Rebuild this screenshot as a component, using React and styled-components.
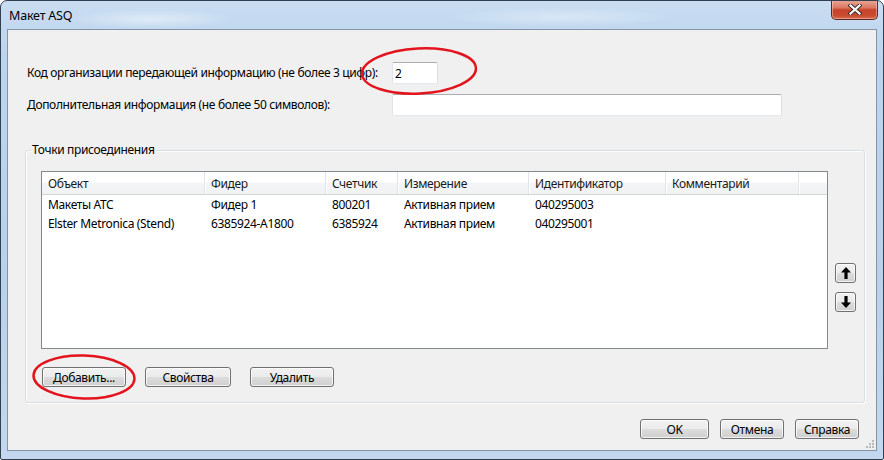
import React from "react";
import styled, { createGlobalStyle } from "styled-components";

const Global = createGlobalStyle`
  html, body { margin: 0; padding: 0; background: #ffffff; }
  body { font-family: "Noto Sans", "Open Sans", sans-serif; font-size: 12px; color: #000; letter-spacing: -0.35px; }
  * { box-sizing: border-box; }
`;

const Window = styled.div`
  position: relative;
  width: 884px;
  height: 460px;
  border: 1px solid #33404f;
  border-radius: 7px 7px 2px 2px;
  background:
    radial-gradient(ellipse 120px 14px at 150px 18px, rgba(255,255,255,0.45), rgba(255,255,255,0) 70%),
    radial-gradient(ellipse 160px 14px at 560px 16px, rgba(255,255,255,0.35), rgba(255,255,255,0) 70%),
    linear-gradient(to bottom, #c9ddf2 0%, #bcd4ed 12%, #b9d1ea 60%, #c3d8ee 100%);
  padding: 0 6px 8px 6px;
  display: flex;
  flex-direction: column;
  overflow: hidden;
`;

const TitleBar = styled.div`
  height: 28px;
  display: flex;
  align-items: flex-start;
  justify-content: space-between;
`;

const Title = styled.div`
  padding: 7px 0 0 2px;
  font-size: 12.5px;
  line-height: 16px;
  letter-spacing: -0.2px;
  color: #000;
`;

const CloseButton = styled.div`
  margin-top: -1px;
  margin-right: -1px;
  width: 47px;
  height: 20px;
  border: 1px solid #5a2a22;
  border-top: none;
  border-radius: 0 0 5px 5px;
  background: linear-gradient(to bottom, #e9a897 0%, #dc7a64 40%, #c8432b 52%, #c94a2f 80%, #d86a4b 100%);
  box-shadow: inset 0 0 0 1px rgba(255, 220, 210, 0.45);
  display: flex;
  align-items: center;
  justify-content: center;
`;

const Client = styled.div`
  position: relative;
  flex: 1;
  background: #f0f0f0;
  border: 1px solid #8494a8;
  padding: 32px 11px 0 17px;
  display: flex;
  flex-direction: column;
`;

const FormGrid = styled.div`
  display: grid;
  grid-template-columns: 365px auto;
  row-gap: 10px;
  margin-left: 2px;
  align-items: center;
  justify-items: start;
`;

const Label = styled.label`
  font-size: 12px;
  line-height: 16px;
  white-space: nowrap;
`;

const TextInput = styled.input`
  width: ${(p) => p.$w}px;
  height: 22px;
  border: 1px solid;
  border-color: #abadb3 #dbdfe6 #e3e9ef #e2e3ea;
  border-radius: 2px;
  background: #fff;
  padding: 0 2px;
  font-family: inherit;
  font-size: 12px;
  color: #000;
  outline: none;
`;

const GroupBox = styled.div`
  position: relative;
  margin-top: 34px;
  border: 1px solid #d5dfe5;
  border-radius: 3px;
  box-shadow: inset 1px 1px 0 #ffffff, 1px 1px 0 #ffffff;
  padding: 20px 8px 15px 15px;
`;

const GroupTitle = styled.div`
  position: absolute;
  top: -9px;
  left: 5px;
  padding: 0 2px 0 1px;
  background: #f0f0f0;
  font-size: 12px;
  line-height: 16px;
`;

const ListArea = styled.div`
  display: flex;
  gap: 7px;
`;

const ListView = styled.div`
  flex: 1;
  height: 178px;
  border: 1px solid #828790;
  background: #fff;
`;

const Columns = "163px 121px 72px 131px 137px 133px 1fr";

const HeaderRow = styled.div`
  display: grid;
  grid-template-columns: ${Columns};
  height: 23px;
  background: linear-gradient(to bottom, #ffffff 0%, #ffffff 45%, #f4f5f7 50%, #f1f2f4 100%);
  border-bottom: 1px solid #d5d5d5;
`;

const HeaderCell = styled.div`
  display: flex;
  align-items: center;
  padding-left: 6px;
  color: #1a1a1a;
  font-size: 12px;
  border-right: ${(p) => (p.$last ? "none" : "1px solid #e1e5ea")};
  box-shadow: ${(p) => (p.$last ? "none" : "1px 0 0 #ffffff")};
  white-space: nowrap;
`;

const Row = styled.div`
  display: grid;
  grid-template-columns: ${Columns};
  height: 19px;
  &:first-of-type { margin-top: 3px; }
`;

const Cell = styled.div`
  display: flex;
  align-items: center;
  padding-left: 6px;
  font-size: 12px;
  white-space: nowrap;
  color: #000;
`;

const MoveButtons = styled.div`
  display: flex;
  flex-direction: column;
  gap: 9px;
  padding-top: 92px;
  width: 21px;
`;

const Button = styled.button`
  width: ${(p) => p.$w}px;
  height: 20px;
  padding: 0;
  border: 1px solid #707070;
  border-radius: 3px;
  background: linear-gradient(to bottom, #f2f2f2 0%, #ebebeb 49%, #dddddd 51%, #cfcfcf 100%);
  box-shadow: inset 0 0 0 1px rgba(255, 255, 255, 0.75);
  font-family: inherit;
  font-size: 12px;
  letter-spacing: inherit;
  color: #000;
  display: flex;
  align-items: center;
  justify-content: center;
`;

const ButtonRow = styled.div`
  display: flex;
  gap: 19px;
  margin-top: 18px;
  margin-left: 1px;
`;

const DialogButtons = styled.div`
  display: flex;
  justify-content: flex-end;
  gap: 11px;
  margin-top: 16px;
  margin-right: 6px;
`;

const Grip = styled.svg`
  position: absolute;
  right: 2px;
  bottom: 2px;
`;

const Annotations = styled.svg`
  position: absolute;
  left: -1px;
  top: -1px;
  pointer-events: none;
`;

const headers = ["Объект", "Фидер", "Счетчик", "Измерение", "Идентификатор", "Комментарий", ""];
const rows = [
  ["Макеты АТС", "Фидер 1", "800201", "Активная прием", "040295003", "", ""],
  ["Elster Metronica (Stend)", "6385924-A1800", "6385924", "Активная прием", "040295001", "", ""],
];

const ArrowUp = () => (
  <svg width="10" height="12" viewBox="0 0 10 12">
    <path d="M5 0 L10 5.5 L6.6 5.5 L6.6 12 L3.4 12 L3.4 5.5 L0 5.5 Z" fill="#000" />
  </svg>
);

const ArrowDown = () => (
  <svg width="10" height="12" viewBox="0 0 10 12">
    <path d="M5 12 L10 6.5 L6.6 6.5 L6.6 0 L3.4 0 L3.4 6.5 L0 6.5 Z" fill="#000" />
  </svg>
);

export default function App() {
  return (
    <>
      <Global />
      <Window>
        <TitleBar>
          <Title>Макет ASQ</Title>
          <CloseButton>
            <svg width="14" height="11" viewBox="0 0 14 11">
              <path d="M2.5 1.5 L11.5 9.5 M11.5 1.5 L2.5 9.5" stroke="#3a2a28" strokeWidth="4" strokeLinecap="square" />
              <path d="M2.5 1.5 L11.5 9.5 M11.5 1.5 L2.5 9.5" stroke="#ffffff" strokeWidth="2.2" strokeLinecap="square" />
            </svg>
          </CloseButton>
        </TitleBar>
        <Client>
          <FormGrid>
            <Label>Код организации передающей информацию (не более 3 цифр):</Label>
            <TextInput $w={46} defaultValue="2" />
            <Label>Дополнительная информация (не более 50 символов):</Label>
            <TextInput $w={390} defaultValue="" />
          </FormGrid>
          <GroupBox>
            <GroupTitle>Точки присоединения</GroupTitle>
            <ListArea>
              <ListView>
                <HeaderRow>
                  {headers.map((h, i) => (
                    <HeaderCell key={i} $last={i === headers.length - 1}>{h}</HeaderCell>
                  ))}
                </HeaderRow>
                {rows.map((r, i) => (
                  <Row key={i}>
                    {r.map((c, j) => (
                      <Cell key={j}>{c}</Cell>
                    ))}
                  </Row>
                ))}
              </ListView>
              <MoveButtons>
                <Button $w={21}><ArrowUp /></Button>
                <Button $w={21}><ArrowDown /></Button>
              </MoveButtons>
            </ListArea>
            <ButtonRow>
              <Button $w={84}>Добавить...</Button>
              <Button $w={86}>Свойства</Button>
              <Button $w={84}>Удалить</Button>
            </ButtonRow>
          </GroupBox>
          <DialogButtons>
            <Button $w={69}>OK</Button>
            <Button $w={64}>Отмена</Button>
            <Button $w={64}>Справка</Button>
          </DialogButtons>
          <Grip width="8" height="8" viewBox="0 0 8 8">
            {[[6, 0], [6, 3], [3, 3], [6, 6], [3, 6], [0, 6]].map(([x, y], i) => (
              <rect key={i} x={x} y={y} width="2" height="2" fill="#b8b8b8" />
            ))}
          </Grip>
        </Client>
        <Annotations width="884" height="460" viewBox="0 0 884 460">
          <ellipse cx="419" cy="71" rx="57" ry="22.5" transform="rotate(-3 419 71)" fill="none" stroke="#e3141d" strokeWidth="2.5" />
          <ellipse cx="84" cy="377" rx="50.5" ry="21.5" transform="rotate(2 84 377)" fill="none" stroke="#e3141d" strokeWidth="2.5" />
        </Annotations>
      </Window>
    </>
  );
}
